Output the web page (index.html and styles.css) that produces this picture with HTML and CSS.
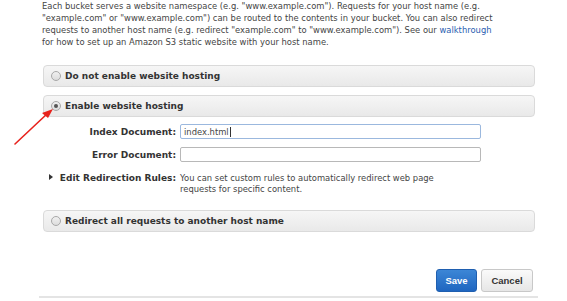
FILE: index.html
```html
<!DOCTYPE html>
<html>
<head>
<meta charset="utf-8">
<link rel="stylesheet" href="styles.css">
</head>
<body>
<div class="page">
  <p class="intro">Each bucket serves a website namespace (e.g. "www.example.com"). Requests for your host name (e.g.<br>"example.com" or "www.example.com") can be routed to the contents in your bucket. You can also redirect<br>requests to another host name (e.g. redirect "example.com" to "www.example.com"). See our <a class="link" href="#">walkthrough</a><br>for how to set up an Amazon S3 static website with your host name.</p>

  <div class="bar bar-first"><span class="radio"></span><span class="bar-label">Do not enable website hosting</span></div>
  <div class="bar bar-second"><span class="radio checked"></span><span class="bar-label">Enable website hosting</span></div>

  <div class="form">
    <div class="lbl">Index Document:</div>
    <div class="input input-focus"><span>index.html</span><span class="caret"></span></div>
    <div class="lbl">Error Document:</div>
    <div class="input"></div>
    <div class="lbl lbl-rules"><span class="tri"></span>Edit Redirection Rules:</div>
    <div class="desc">You can set custom rules to automatically redirect web page<br>requests for specific content.</div>
  </div>

  <div class="bar bar-third"><span class="radio"></span><span class="bar-label">Redirect all requests to another host name</span></div>

  <div class="actions">
    <button class="btn btn-save">Save</button>
    <button class="btn btn-cancel">Cancel</button>
  </div>
  <div class="rule"></div>

  <svg class="arrow" width="60" height="50" viewBox="0 0 60 50">
    <line x1="15" y1="49" x2="48" y2="18" stroke="#e8221c" stroke-width="1.6" stroke-linecap="round"/>
    <polygon points="53,14 42,18 48,23" fill="#e8221c"/>
  </svg>
</div>
</body>
</html>
```
FILE: styles.css
```css
html, body {
  margin: 0;
  padding: 0;
  background: #ffffff;
}
.page {
  position: relative;
  width: 567px;
  height: 301px;
  overflow: hidden;
  font-family: "DejaVu Sans", Verdana, sans-serif;
  font-size: 8.4px;
  color: #444444;
}
.intro {
  margin: 0 0 0 42px;
  padding-top: 0;
  line-height: 12px;
}
.link {
  color: #2a5db0;
  text-decoration: none;
}
.bar {
  box-sizing: border-box;
  margin-left: 43px;
  width: 492px;
  height: 22px;
  border: 1px solid #dadada;
  border-radius: 4px;
  background: linear-gradient(#f6f6f6, #e9e9e9);
  display: flex;
  align-items: center;
  padding-left: 7px;
}
.bar-first { margin-top: 17px; }
.bar-second { margin-top: 8px; }
.bar-third { margin-top: 15px; }
.radio {
  width: 8px;
  height: 8px;
  border: 1px solid #a8a8a8;
  border-radius: 50%;
  background: linear-gradient(#f0f0f0, #dcdcdc);
  display: flex;
  align-items: center;
  justify-content: center;
  margin-right: 4px;
}
.radio.checked::after {
  content: "";
  width: 4px;
  height: 4px;
  border-radius: 50%;
  background: #555555;
}
.bar-label {
  font-weight: bold;
  font-size: 9px;
  color: #333333;
}
.form {
  display: grid;
  grid-template-columns: 176px 301px;
  column-gap: 4px;
  row-gap: 8px;
  margin-top: 7px;
  align-items: center;
}
.lbl {
  text-align: right;
  font-weight: bold;
  font-size: 9px;
  color: #333333;
}
.input {
  height: 13px;
  border: 1px solid #b8b8b8;
  border-radius: 2px;
  background: #fff;
  display: flex;
  align-items: center;
  padding-left: 3px;
  color: #444;
}
.input-focus {
  border-color: #9bb8de;
}
.caret {
  display: inline-block;
  width: 1px;
  height: 10px;
  background: #333;
  margin-left: 1px;
}
.lbl-rules {
  align-self: start;
  margin-top: 3px;
  line-height: 11px;
}
.tri {
  display: inline-block;
  width: 0;
  height: 0;
  border-top: 3px solid transparent;
  border-bottom: 3px solid transparent;
  border-left: 4px solid #333;
  margin-right: 7px;
  vertical-align: 1px;
}
.desc {
  margin-top: 3px;
  line-height: 11px;
}
.actions {
  display: flex;
  justify-content: flex-end;
  gap: 4px;
  width: 533px;
  margin-top: 37px;
}
.btn {
  height: 23px;
  border-radius: 3px;
  font-family: "Liberation Sans", Arial, sans-serif;
  font-weight: bold;
  font-size: 9.5px;
  padding: 0;
}
.btn-save {
  width: 41px;
  border: 1px solid #1f5fb0;
  background: linear-gradient(#3c86d6, #1f66c0);
  color: #ffffff;
}
.btn-cancel {
  width: 52px;
  border: 1px solid #c8c8c8;
  background: linear-gradient(#fafafa, #e6e6e6);
  color: #333333;
}
.rule {
  margin-left: 39px;
  width: 499px;
  height: 2px;
  background: #e4e4e4;
  margin-top: 4px;
}
.arrow {
  position: absolute;
  left: 0;
  top: 95px;
}
```
